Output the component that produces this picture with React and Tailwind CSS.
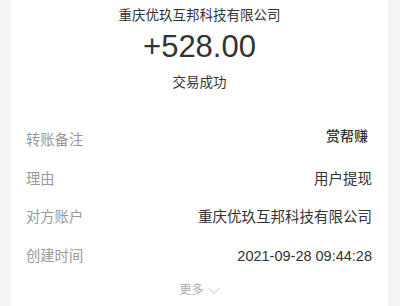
import React from "react";

const FONT = { fontFamily: '"Liberation Sans", "Noto Sans CJK SC", sans-serif' };

function Row({ label, value, bold, raised }) {
  return (
    <div className="flex h-[38.6px] items-center justify-between pl-[15px] pr-[16px]">
      <span className="text-[14.3px] leading-[20px] text-[#999999]">{label}</span>
      <span
        className={
          "text-[14.5px] leading-[20px] text-[#333333] " +
          (bold ? "font-medium " : "") +
          (raised ? "mb-[8px] mr-[4px] text-[14px] text-[#222222]" : "")
        }
      >
        {value}
      </span>
    </div>
  );
}

export default function App() {
  return (
    <div className="flex h-[306px] w-[400px] overflow-hidden bg-[#f4f4f4]" style={FONT}>
      <div className="ml-[11px] mr-[12px] flex flex-1 flex-col bg-white">
        <div className="pt-[6px] text-center text-[13.5px] leading-[20px] text-[#333333]">
          重庆优玖互邦科技有限公司
        </div>
        <div className="mt-[3px] text-center text-[31px] leading-[36px] text-[#333333]">
          +528.00
        </div>
        <div className="mt-[8px] text-center text-[13.5px] leading-[20px] text-[#333333]">
          交易成功
        </div>
        <div className="mt-[28px] flex flex-col">
          <Row label="转账备注" value="赏帮赚" bold raised />
          <Row label="理由" value="用户提现" />
          <Row label="对方账户" value="重庆优玖互邦科技有限公司" />
          <Row label="创建时间" value="2021-09-28 09:44:28" />
        </div>
        <div className="mt-[5px] flex items-center justify-center gap-[4px] text-[12px] leading-[20px] text-[#aaaaaa]">
          <span>更多</span>
          <svg width="12" height="8" viewBox="0 0 12 8" className="mt-[1px]">
            <path d="M0.5 1 L6 6.5 L11.5 1" fill="none" stroke="#c4c4c4" strokeWidth="1" />
          </svg>
        </div>
      </div>
    </div>
  );
}
